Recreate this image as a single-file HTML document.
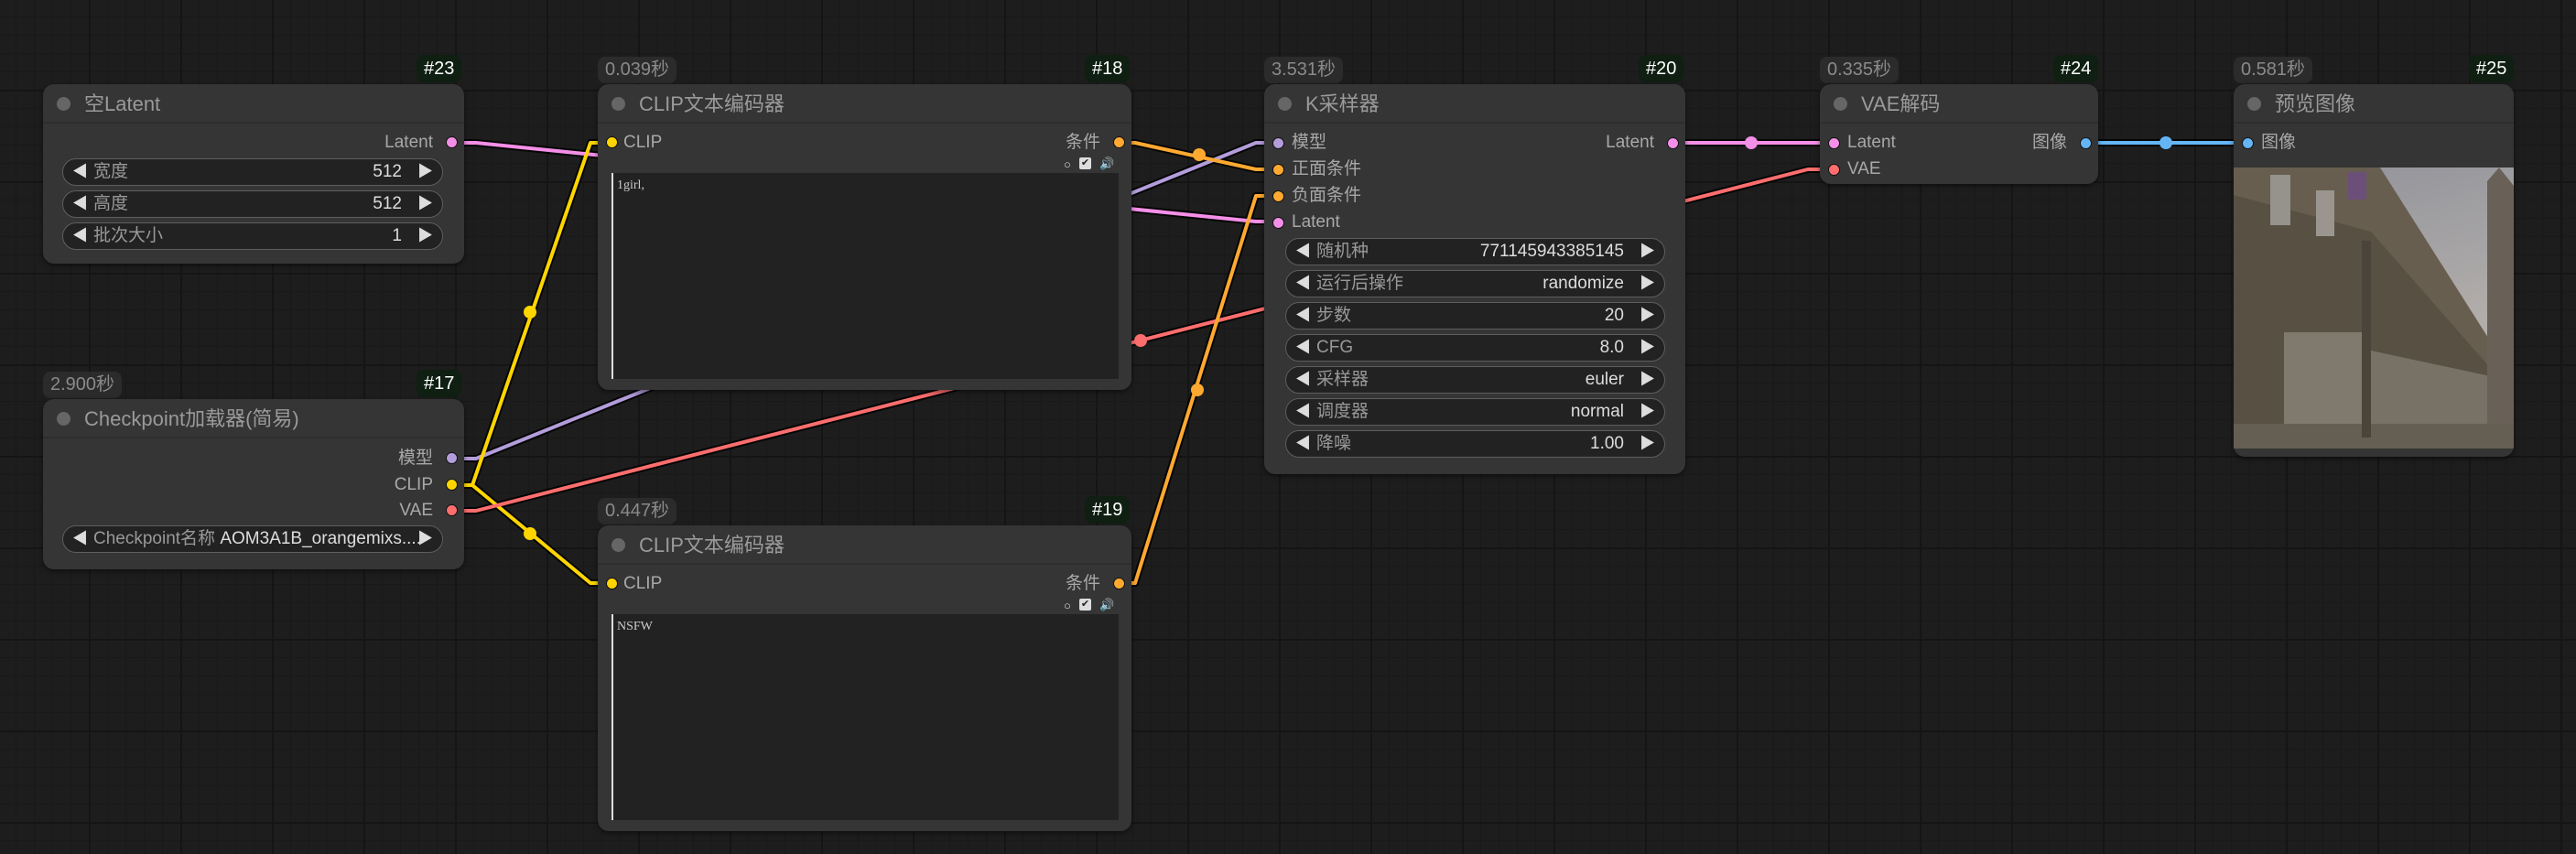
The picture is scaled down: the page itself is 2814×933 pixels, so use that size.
<!DOCTYPE html>
<html><head><meta charset="utf-8"><style>
*{box-sizing:border-box;margin:0;padding:0}
body{width:2814px;height:933px;overflow:hidden;background:#1d1d1d;font-family:"Liberation Sans","Noto Sans CJK SC",sans-serif;position:relative;
background-image:linear-gradient(#151515 2px,transparent 2px),linear-gradient(90deg,#151515 2px,transparent 2px),linear-gradient(#191919 1px,transparent 1px),linear-gradient(90deg,#191919 1px,transparent 1px);
background-size:100px 100px,100px 100px,20px 20px,20px 20px;background-position:-3px -2px,-3px -2px,-3px -2px,-3px -2px}
.n{position:absolute;background:#353535;border-radius:12px;box-shadow:0 2px 6px rgba(0,0,0,.5)}
.h{height:43px;border-bottom:2px solid #2e2e2e;position:relative;color:#9a9a9a;font-size:22px;line-height:43px;padding-left:45px;white-space:nowrap}
.h:before{content:"";position:absolute;left:15px;top:14px;width:15px;height:15px;border-radius:50%;background:#666}
.b{position:absolute;top:62px;height:29px;border-radius:8px;background:#2b2b2b;color:#8a8a8a;font-size:20px;line-height:29px;padding:0 8px;white-space:nowrap}
.id{position:absolute;top:60px;height:30px;border-radius:8px;background:#0f1f12;color:#fff;font-size:20px;line-height:30px;padding:0 8px}
.s{position:absolute;font-size:19px;color:#a8a8a8;line-height:24px;white-space:nowrap}
.d{position:absolute;width:13px;height:13px;border-radius:50%;border:1.5px solid #111}
.w{position:absolute;height:30px;border-radius:15px;background:#222;border:1.5px solid #5e5e5e;font-size:19px;line-height:27px;color:#999;white-space:nowrap}
.w .l{position:absolute;left:10px;color:#ddd;font-size:17px}
.w .t{position:absolute;left:33px}
.w .v{position:absolute;right:44px;color:#ddd}
.w .r{position:absolute;right:10px;color:#ddd;font-size:17px}
.ta{position:absolute;background:#222;border-left:2px solid #ddd;font-family:"Liberation Serif","Noto Serif CJK SC",serif;font-size:14px;color:#ccc;padding:6px 4px}
.ic{position:absolute;font-size:13px;color:#ddd}
</style></head><body>
<svg width="2814" height="933" style="position:absolute;left:0;top:0">
<g fill="none" stroke-linejoin="round">
<g stroke="#000" stroke-width="8" opacity=".8">
<path d="M506 156 L520 156 L1372 242 L1396 242"/>
<path d="M506 501 L520 501 L1372 156 L1396 156"/>
<path d="M506 530 L516 530 L645 156 L668 156"/>
<path d="M506 530 L516 530 L645 637 L668 637"/>
<path d="M506 558 L520 558 L1975 185 L1997 185"/>
<path d="M1222 156 L1240 156 L1372 185 L1396 185"/>
<path d="M1222 637 L1240 637 L1372 214 L1396 214"/>
<path d="M1828 156 L1997 156"/>
<path d="M2282 156 L2452 156"/>
</g>
<path stroke="#f48fe8" stroke-width="4" d="M506 156 L520 156 L1372 242 L1396 242"/>
<path stroke="#b39ddb" stroke-width="4" d="M506 501 L520 501 L1372 156 L1396 156"/>
<path stroke="#ffd500" stroke-width="4" d="M506 530 L516 530 L645 156 L668 156"/>
<path stroke="#ffd500" stroke-width="4" d="M506 530 L516 530 L645 637 L668 637"/>
<path stroke="#ff6e6e" stroke-width="4" d="M506 558 L520 558 L1975 185 L1997 185"/>
<path stroke="#ffa931" stroke-width="4" d="M1222 156 L1240 156 L1372 185 L1396 185"/>
<path stroke="#ffa931" stroke-width="4" d="M1222 637 L1240 637 L1372 214 L1396 214"/>
<path stroke="#f48fe8" stroke-width="4" d="M1828 156 L1997 156"/>
<path stroke="#64b5f6" stroke-width="4" d="M2282 156 L2452 156"/>
</g>
<circle cx="579" cy="341" r="7" fill="#ffd500"/>
<circle cx="579" cy="583" r="7" fill="#ffd500"/>
<circle cx="1246" cy="372" r="7" fill="#ff6e6e"/>
<circle cx="1310" cy="169" r="7" fill="#ffa931"/>
<circle cx="1308" cy="426" r="7" fill="#ffa931"/>
<circle cx="1913" cy="156" r="7" fill="#f48fe8"/>
<circle cx="2366" cy="156" r="7" fill="#64b5f6"/>
</svg>

<!-- node 23 -->
<div class="id" style="left:455px">#23</div>
<div class="n" style="left:47px;top:92px;width:460px;height:196px">
<div class="h">空Latent</div>
<div class="s" style="right:34px;top:52px">Latent</div>
<div class="d" style="right:7px;top:57px;background:#f48fe8"></div>
<div class="w" style="left:21px;top:81px;width:416px"><span class="l">◀</span><span class="t">宽度</span><span class="v">512</span><span class="r">▶</span></div>
<div class="w" style="left:21px;top:116px;width:416px"><span class="l">◀</span><span class="t">高度</span><span class="v">512</span><span class="r">▶</span></div>
<div class="w" style="left:21px;top:151px;width:416px"><span class="l">◀</span><span class="t">批次大小</span><span class="v">1</span><span class="r">▶</span></div>
</div>

<!-- node 17 -->
<div class="b" style="left:47px;top:406px">2.900秒</div>
<div class="id" style="left:455px;top:404px">#17</div>
<div class="n" style="left:47px;top:436px;width:460px;height:186px">
<div class="h">Checkpoint加载器(简易)</div>
<div class="s" style="right:34px;top:53px">模型</div>
<div class="d" style="right:7px;top:58px;background:#b39ddb"></div>
<div class="s" style="right:34px;top:82px">CLIP</div>
<div class="d" style="right:7px;top:87px;background:#ffd500"></div>
<div class="s" style="right:34px;top:110px">VAE</div>
<div class="d" style="right:7px;top:115px;background:#ff6e6e"></div>
<div class="w" style="left:21px;top:138px;width:416px"><span class="l">◀</span><span class="t">Checkpoint名称 <span style="color:#ddd">AOM3A1B_orangemixs....</span></span><span class="r">▶</span></div>
</div>

<!-- node 18 -->
<div class="b" style="left:653px">0.039秒</div>
<div class="id" style="left:1185px">#18</div>
<div class="n" style="left:653px;top:92px;width:583px;height:334px">
<div class="h">CLIP文本编码器</div>
<div class="d" style="left:9px;top:57px;background:#ffd500"></div>
<div class="s" style="left:28px;top:52px">CLIP</div>
<div class="s" style="right:34px;top:52px">条件</div>
<div class="d" style="right:7px;top:57px;background:#ffa931"></div>
<div class="ic" style="left:509px;top:80px">○</div>
<div class="ic" style="left:526px;top:80px;width:13px;height:13px;background:#ddd;color:#222;font-size:11px;line-height:13px;text-align:center;border-radius:2px">✔</div>
<div class="ic" style="left:548px;top:79px;color:#aab">🔊</div>
<div class="ta" style="left:15px;top:97px;width:554px;height:225px">1girl,</div>
</div>

<!-- node 19 -->
<div class="b" style="left:653px;top:544px">0.447秒</div>
<div class="id" style="left:1185px;top:542px">#19</div>
<div class="n" style="left:653px;top:574px;width:583px;height:334px">
<div class="h">CLIP文本编码器</div>
<div class="d" style="left:9px;top:57px;background:#ffd500"></div>
<div class="s" style="left:28px;top:52px">CLIP</div>
<div class="s" style="right:34px;top:52px">条件</div>
<div class="d" style="right:7px;top:57px;background:#ffa931"></div>
<div class="ic" style="left:509px;top:80px">○</div>
<div class="ic" style="left:526px;top:80px;width:13px;height:13px;background:#ddd;color:#222;font-size:11px;line-height:13px;text-align:center;border-radius:2px">✔</div>
<div class="ic" style="left:548px;top:79px;color:#aab">🔊</div>
<div class="ta" style="left:15px;top:97px;width:554px;height:225px">NSFW</div>
</div>

<!-- node 20 -->
<div class="b" style="left:1381px">3.531秒</div>
<div class="id" style="left:1790px">#20</div>
<div class="n" style="left:1381px;top:92px;width:460px;height:426px">
<div class="h">K采样器</div>
<div class="d" style="left:9px;top:58px;background:#b39ddb"></div><div class="s" style="left:30px;top:52px">模型</div>
<div class="d" style="left:9px;top:87px;background:#ffa931"></div><div class="s" style="left:30px;top:81px">正面条件</div>
<div class="d" style="left:9px;top:116px;background:#ffa931"></div><div class="s" style="left:30px;top:110px">负面条件</div>
<div class="d" style="left:9px;top:145px;background:#f48fe8"></div><div class="s" style="left:30px;top:139px">Latent</div>
<div class="s" style="right:34px;top:52px">Latent</div>
<div class="d" style="right:7px;top:58px;background:#f48fe8"></div>
<div class="w" style="left:23px;top:168px;width:415px"><span class="l">◀</span><span class="t">随机种</span><span class="v">771145943385145</span><span class="r">▶</span></div>
<div class="w" style="left:23px;top:203px;width:415px"><span class="l">◀</span><span class="t">运行后操作</span><span class="v">randomize</span><span class="r">▶</span></div>
<div class="w" style="left:23px;top:238px;width:415px"><span class="l">◀</span><span class="t">步数</span><span class="v">20</span><span class="r">▶</span></div>
<div class="w" style="left:23px;top:273px;width:415px"><span class="l">◀</span><span class="t">CFG</span><span class="v">8.0</span><span class="r">▶</span></div>
<div class="w" style="left:23px;top:308px;width:415px"><span class="l">◀</span><span class="t">采样器</span><span class="v">euler</span><span class="r">▶</span></div>
<div class="w" style="left:23px;top:343px;width:415px"><span class="l">◀</span><span class="t">调度器</span><span class="v">normal</span><span class="r">▶</span></div>
<div class="w" style="left:23px;top:378px;width:415px"><span class="l">◀</span><span class="t">降噪</span><span class="v">1.00</span><span class="r">▶</span></div>
</div>

<!-- node 24 -->
<div class="b" style="left:1988px">0.335秒</div>
<div class="id" style="left:2243px">#24</div>
<div class="n" style="left:1988px;top:92px;width:304px;height:109px">
<div class="h">VAE解码</div>
<div class="d" style="left:9px;top:58px;background:#f48fe8"></div><div class="s" style="left:30px;top:52px">Latent</div>
<div class="d" style="left:9px;top:87px;background:#ff6e6e"></div><div class="s" style="left:30px;top:81px">VAE</div>
<div class="s" style="right:34px;top:52px">图像</div>
<div class="d" style="right:7px;top:58px;background:#64b5f6"></div>
</div>

<!-- node 25 -->
<div class="b" style="left:2440px">0.581秒</div>
<div class="id" style="left:2697px">#25</div>
<div class="n" style="left:2440px;top:92px;width:306px;height:407px">
<div class="h">预览图像</div>
<div class="d" style="left:9px;top:58px;background:#64b5f6"></div><div class="s" style="left:30px;top:52px">图像</div>
<svg style="position:absolute;left:0;top:91px" width="306" height="307" viewBox="0 0 306 307">
<defs><linearGradient id="sky" x1="0" y1="0" x2="0.3" y2="1"><stop offset="0" stop-color="#8f9099"/><stop offset="1" stop-color="#bdb8b0"/></linearGradient></defs>
<rect width="306" height="307" fill="url(#sky)"/>
<polygon points="0,0 160,0 306,230 306,307 0,307" fill="#675e50"/>
<polygon points="0,30 150,70 290,230 290,307 0,307" fill="#575043"/>
<polygon points="55,180 140,180 140,290 55,290" fill="#7f796e"/>
<polygon points="150,200 290,230 290,290 150,290" fill="#777166"/>
<polygon points="277,15 290,0 306,20 306,307 277,307" fill="#696157"/>
<rect x="0" y="280" width="306" height="27" fill="#655e52"/>
<rect x="140" y="80" width="10" height="215" fill="#4a443a"/>
<rect x="40" y="8" width="22" height="55" fill="#96928c"/>
<rect x="90" y="25" width="20" height="50" fill="#9a968f"/>
<rect x="125" y="5" width="20" height="30" fill="#6b4f78"/>
</svg>
</div>
</body></html>
